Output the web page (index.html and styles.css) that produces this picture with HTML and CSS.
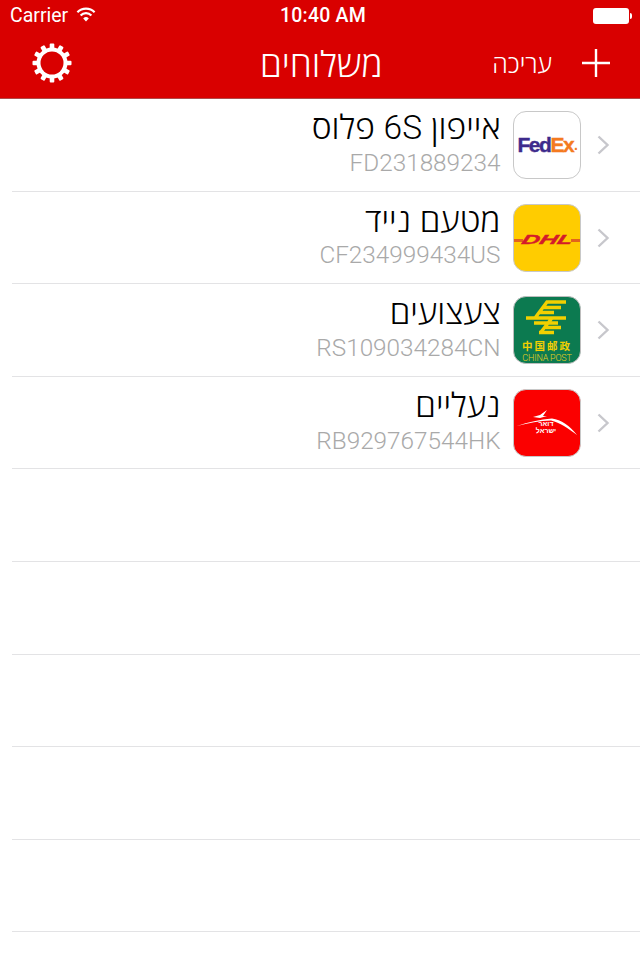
FILE: index.html
```html
<!DOCTYPE html>
<html lang="he">
<head>
<meta charset="utf-8">
<title>משלוחים</title>
<link rel="stylesheet" href="styles.css">
</head>
<body>
<header class="header">
  <div class="status">
    <div class="status-left">
      <span class="carrier">Carrier</span>
      <svg class="wifi" viewBox="0 0 20 15" width="20" height="15"><path d="M10 14.5 7.2 11.4a4 4 0 0 1 5.6 0Z" fill="#fff"/><path d="M4.6 8.4a7.6 7.6 0 0 1 10.8 0M1.4 5.2a12.2 12.2 0 0 1 17.2 0" fill="none" stroke="#fff" stroke-width="2.2"/></svg>
    </div>
    <div class="status-time">10:40 AM</div>
    <div class="status-right">
      <span class="battery"></span><span class="battery-tip"></span>
    </div>
  </div>
  <div class="nav">
    <svg class="gear" viewBox="0 0 40 40" width="40" height="40">
      <g fill="#fff">
        <rect x="17.7" y="0.5" width="4.6" height="39" rx="1"/>
        <rect x="17.7" y="0.5" width="4.6" height="39" rx="1" transform="rotate(30 20 20)"/>
        <rect x="17.7" y="0.5" width="4.6" height="39" rx="1" transform="rotate(60 20 20)"/>
        <rect x="17.7" y="0.5" width="4.6" height="39" rx="1" transform="rotate(90 20 20)"/>
        <rect x="17.7" y="0.5" width="4.6" height="39" rx="1" transform="rotate(120 20 20)"/>
        <rect x="17.7" y="0.5" width="4.6" height="39" rx="1" transform="rotate(150 20 20)"/>
      </g>
      <circle cx="20" cy="20" r="15.5" fill="#fff"/>
      <circle cx="20" cy="20" r="11.5" fill="#d90000"/>
    </svg>
    <div class="nav-title">משלוחים</div>
    <div class="nav-edit">עריכה</div>
    <svg class="plus" viewBox="0 0 28 28" width="28" height="28"><path d="M14 0v28M0 14h28" stroke="#fff" stroke-width="2.4" fill="none"/></svg>
  </div>
</header>
<main class="list">
  <div class="row">
    <svg class="chev" viewBox="0 0 13 20" width="13" height="20"><path d="M1.5 1.5 10.5 10 1.5 18.5" fill="none" stroke="#c7c7cc" stroke-width="2.4"/></svg>
    <div class="logo logo-fedex"><span class="fed">Fed</span><span class="ex">Ex</span><span class="dot">.</span></div>
    <div class="text"><div class="name">אייפון <span class="latin">6S</span> פלוס</div><div class="code">FD231889234</div></div>
  </div>
  <div class="row">
    <svg class="chev" viewBox="0 0 13 20" width="13" height="20"><path d="M1.5 1.5 10.5 10 1.5 18.5" fill="none" stroke="#c7c7cc" stroke-width="2.4"/></svg>
    <div class="logo logo-dhl"><span class="dash"></span><span class="dhl-box"><span class="dhl">DHL</span></span><span class="dash"></span></div>
    <div class="text"><div class="name">מטעם נייד</div><div class="code">CF234999434US</div></div>
  </div>
  <div class="row">
    <svg class="chev" viewBox="0 0 13 20" width="13" height="20"><path d="M1.5 1.5 10.5 10 1.5 18.5" fill="none" stroke="#c7c7cc" stroke-width="2.4"/></svg>
    <div class="logo logo-china">
      <svg class="cp-mark" viewBox="0 0 66 41" width="66" height="41"><path d="M52 5H33L21 21M47 10.500H29M40 15.500H25M12 21H52M20 26H44M47 30.500H31M40 35.500H25M38 21 27 35" fill="none" stroke="#f3d000" stroke-width="3.400"/></svg>
      <div class="cp-cn">中国邮政</div>
      <div class="cp-en">CHINA POST</div>
    </div>
    <div class="text"><div class="name">צעצועים</div><div class="code">RS109034284CN</div></div>
  </div>
  <div class="row">
    <svg class="chev" viewBox="0 0 13 20" width="13" height="20"><path d="M1.5 1.5 10.5 10 1.5 18.5" fill="none" stroke="#c7c7cc" stroke-width="2.4"/></svg>
    <div class="logo logo-il">
      <svg viewBox="0 0 66 66" width="66" height="66"><path d="M3 36C14 32 26 29.500 38 28.500 47 29.500 56 36 63 45 54 38 46 33 37 30.500 26 30.500 14 33 3 36ZM19 27 26 25 33 20 29 26 33 26 26 28Z" fill="#fff"/><text class="il-text" x="32" y="35.500">דואר</text><text class="il-text" x="32" y="43">ישראל</text></svg>
    </div>
    <div class="text"><div class="name">נעליים</div><div class="code">RB929767544HK</div></div>
  </div>
  <div class="row"></div>
  <div class="row"></div>
  <div class="row"></div>
  <div class="row"></div>
  <div class="row"></div>
</main>
</body>
</html>
```
FILE: styles.css
```css
* { box-sizing: border-box; }
html, body { margin: 0; padding: 0; background: #fff; }
body { width: 640px; height: 960px; overflow: hidden; font-family: "Open Sans", "Liberation Sans", sans-serif; font-weight: 300; }
.header { height: 99px; background: #d90000; color: #fff; border-bottom: 1px solid #b04a4a; }
.status { height: 33px; display: flex; align-items: center; justify-content: space-between; padding: 0 8px 2px 10px; font-family: Roboto, sans-serif; font-size: 19.500px; font-weight: 400; }
.status-left { display: flex; align-items: center; gap: 8px; width: 134px; }
.wifi { margin-top: -3px; }
.status-time { font-weight: 500; letter-spacing: .2px; }
.status-right { width: 130px; display: flex; justify-content: flex-end; align-items: center; }
.battery { width: 36px; height: 16px; background: #fff; border-radius: 3px; }
.battery-tip { width: 2px; height: 6px; background: #fff; border-radius: 0 2px 2px 0; margin-left: 1px; }
.nav { height: 65px; display: flex; align-items: center; padding: 0 30px 6px 32px; }
.gear { flex: none; }
.nav-title { font-size: 35.500px; flex: none; margin-left: 188px; width: 124px; white-space: nowrap; }
.nav-edit { font-size: 25px; margin-left: auto; margin-right: 30px; }
.plus { flex: none; }
.list { direction: rtl; padding-left: 12px; }
.row { height: 92.6px; border-bottom: 1px solid #e3e3e5; display: flex; align-items: center; padding: 1px 30px 0 0; }
.chev { flex: none; margin-left: 16px; }
.logo { width: 68px; height: 68px; border-radius: 13px; flex: none; margin-left: 12.500px; direction: ltr; overflow: hidden; border: 1px solid #c8c8c8; display: flex; align-items: center; justify-content: center; }
.text { min-width: 0; padding-bottom: 5.500px; }
.name { font-size: 33.500px; line-height: 39px; margin-bottom: 1.500px; color: #000; white-space: nowrap; }
.latin { font-family: Roboto, sans-serif; font-weight: 300; }
.code { font-family: Roboto, sans-serif; font-weight: 300; font-size: 24.300px; line-height: 30px; color: #a9a9a9; direction: ltr; text-align: right; }
.logo-fedex { background: #fff; font-family: "Liberation Sans", sans-serif; font-weight: 700; font-size: 21px; letter-spacing: -1.500px; }
.fed { color: #3d2a8c; -webkit-text-stroke: .4px #3d2a8c; }
.ex { color: #f47a20; -webkit-text-stroke: .4px #f47a20; }
.dot { color: #f47a20; margin-left: 1px; font-size: 14px; }
.logo-dhl { background: #ffcc00; align-items: center; }
.dhl-box { width: 48px; flex: none; text-align: center; }
.dhl { display: inline-block; font-family: "Liberation Sans", sans-serif; font-weight: 700; font-style: italic; font-size: 13px; line-height: 14px; color: #d41a2a; -webkit-text-stroke: .4px #d41a2a; transform: scaleX(1.900) skewX(-10deg); }
.dash { flex: 1; height: 3px; background: #e2631c; margin-top: 5px; }
.logo-china { background: #0c7a50; flex-direction: column; justify-content: flex-start; border-color: #bdbdbd; }
.cp-mark { flex: none; }
.cp-cn { font-family: "Noto Sans CJK SC", sans-serif; font-size: 10.500px; line-height: 15px; font-weight: 700; color: #f3d000; letter-spacing: 2px; }
.cp-en { font-family: Roboto, sans-serif; font-weight: 300; font-size: 9px; line-height: 10.500px; color: #e6cf20; letter-spacing: -.2px; }
.logo-il { background: #fb0000; }
.il-text { font-family: "Liberation Sans", sans-serif; font-size: 7px; font-weight: 700; fill: #fff; text-anchor: middle; }
```
